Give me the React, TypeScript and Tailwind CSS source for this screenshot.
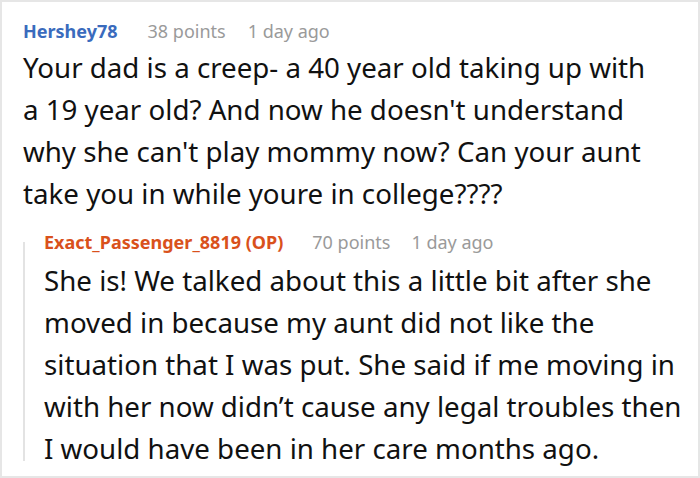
export default function App() {
  return (
    <div className="w-[700px] h-[478px] bg-white border-2 border-[#e6e6e6] overflow-hidden" style={{ fontFamily: '"Noto Sans", sans-serif' }}>
      <div className="pl-[21px] pt-[14px]">
        <div className="flex items-baseline text-[18px] leading-[30px]">
          <span className="font-bold text-[#3a6bbd]">Hershey78</span>
          <span className="ml-[30px] text-[#9a9a9a]">38 points</span>
          <span className="ml-[22px] text-[#9a9a9a]">1 day ago</span>
        </div>
        <p className="w-[636px] text-[27.7px] leading-[42px] text-[#111]">
          Your dad is a creep- a 40 year old taking up with a 19 year old? And now he doesn't understand why she can't play mommy now? Can your aunt take you in while youre in college????
        </p>
        <div className="flex mt-[15px]">
          <div className="w-[2px] shrink-0 bg-[#e3e3e3] mt-[13px] mb-[8px]" />
          <div className="pl-[19px] w-[668px]">
            <div className="flex items-baseline text-[18px] leading-[26px] pb-[4px]">
              <span className="font-bold text-[#d9511c]">Exact_Passenger_8819 (OP)</span>
              <span className="ml-[29px] text-[#9a9a9a]">70 points</span>
              <span className="ml-[21px] text-[#9a9a9a]">1 day ago</span>
            </div>
            <p className="text-[27.7px] leading-[42px] text-[#111]">
              She is! We talked about this a little bit after she moved in because my aunt did not like the situation that I was put. She said if me moving in with her now didn’t cause any legal troubles then I would have been in her care months ago.
            </p>
          </div>
        </div>
      </div>
    </div>
  );
}
